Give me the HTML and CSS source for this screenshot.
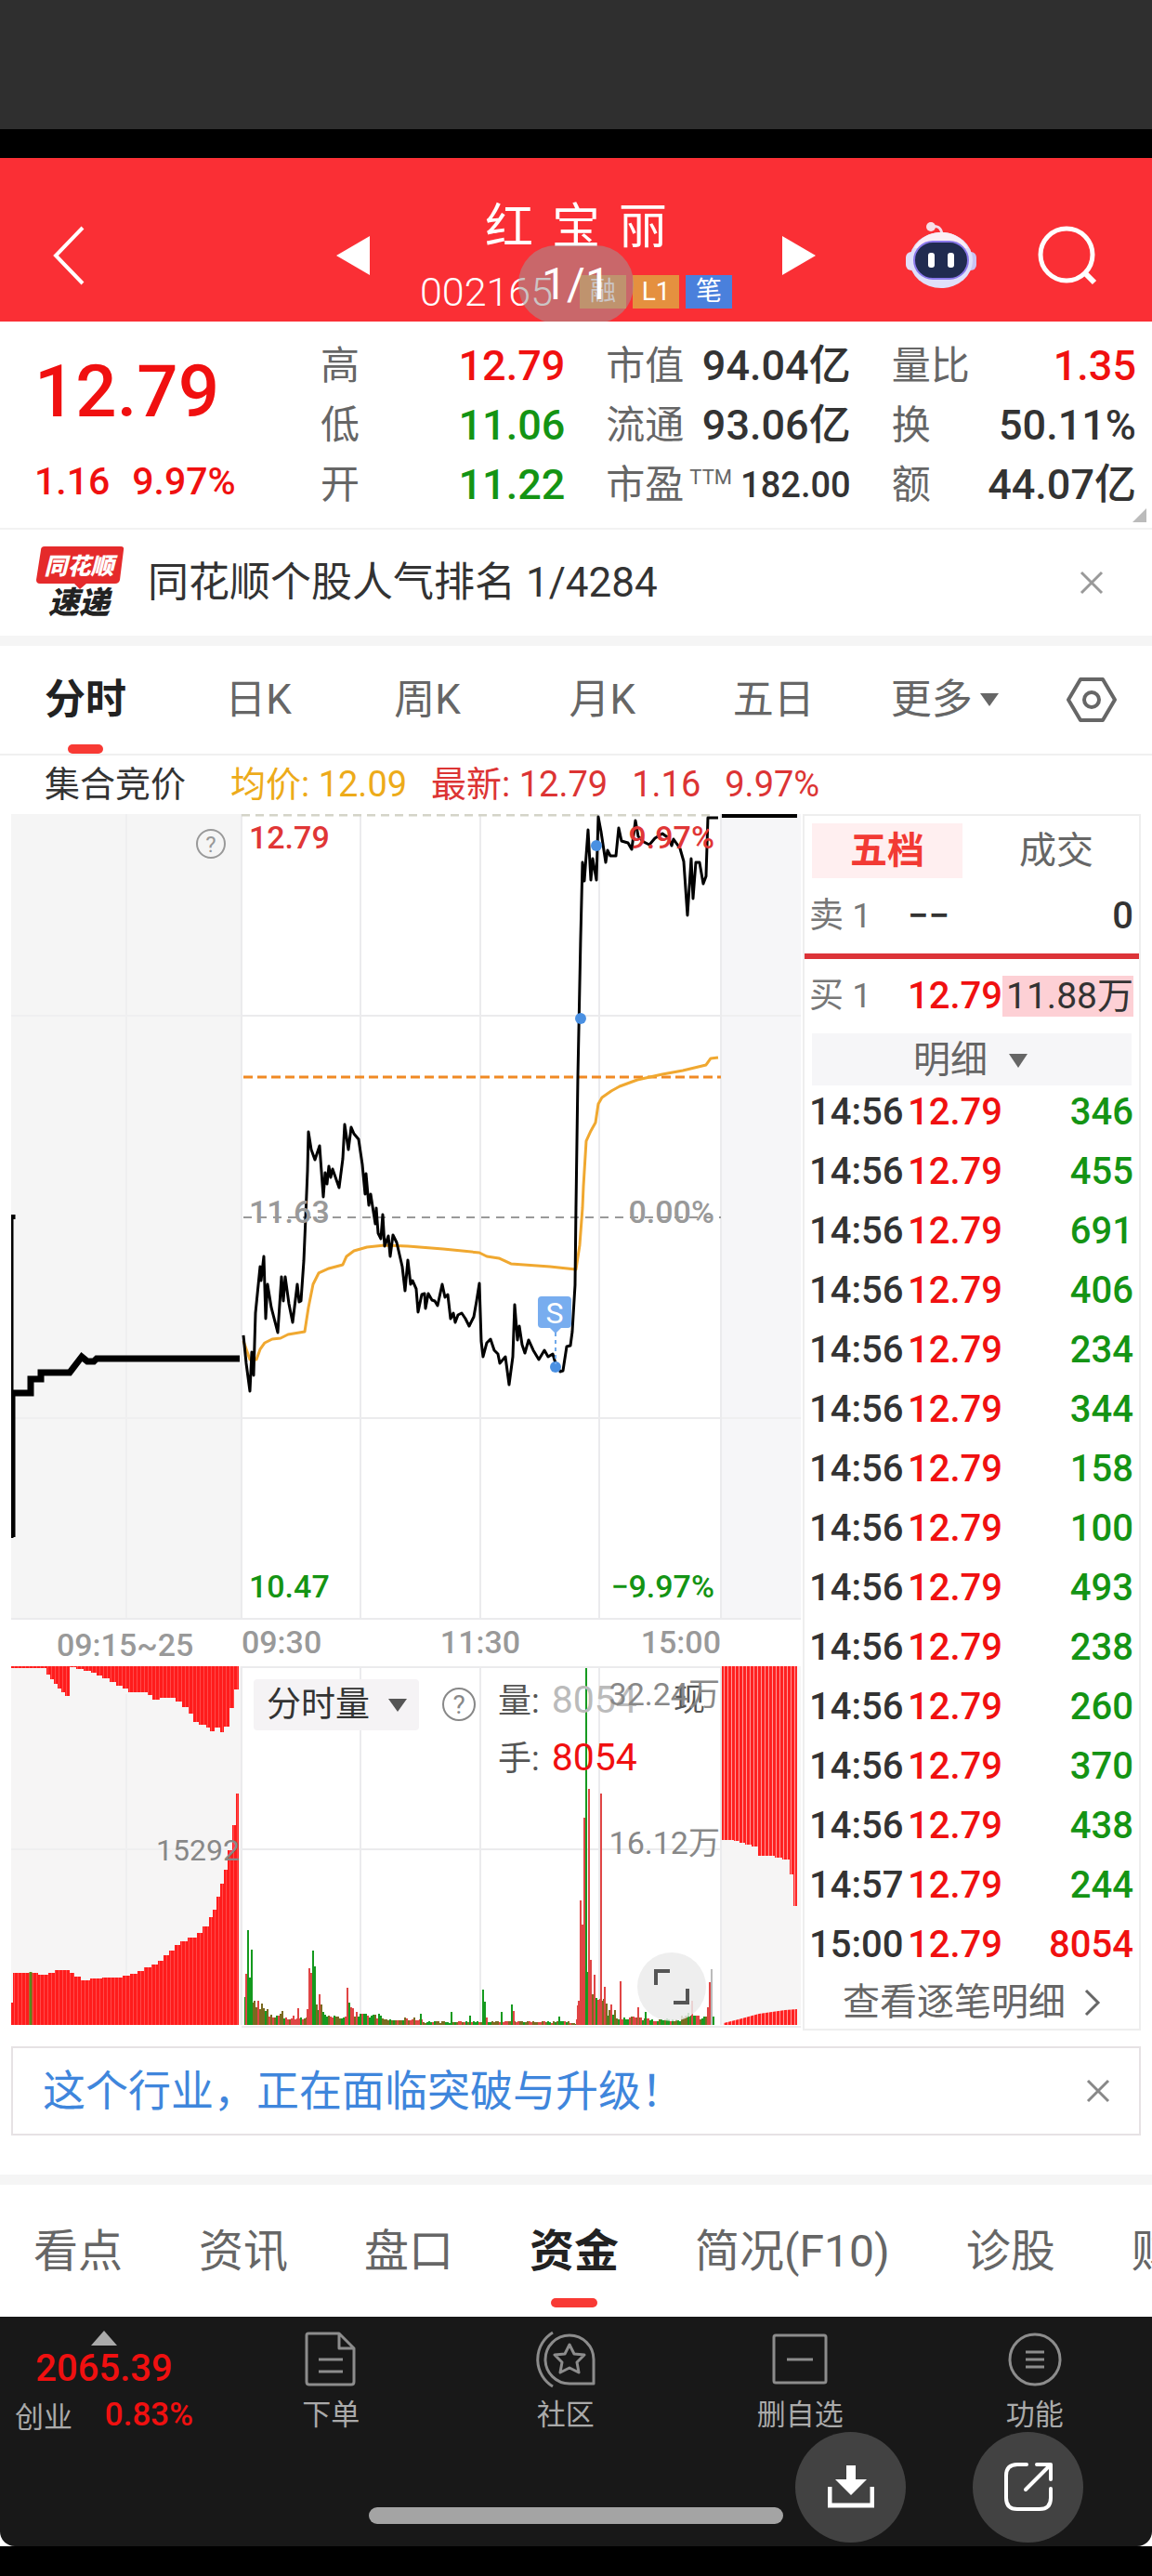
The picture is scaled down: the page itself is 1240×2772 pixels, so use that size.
FILE: index.html
```
<!DOCTYPE html>
<html lang="zh-CN">

<head>
    <meta charset="UTF-8">
    <meta name="viewport" content="width=device-width, initial-scale=1.0">
    <title>红宝丽 002165</title>
    <link rel="stylesheet" href="styles.css">
</head>

<body>
    <div class="viewer-bar"></div>
    <div class="notch"></div>

    <header class="header">
        <button class="icon-btn back" aria-label="返回">
            <svg width="36" height="66" viewBox="0 0 36 66"><path d="M33 3 4 33l29 30" fill="none" stroke="#fff" stroke-width="4"/></svg>
        </button>
        <div class="stock">
            <button class="icon-btn" aria-label="上一只">
                <svg width="36" height="42" viewBox="0 0 36 42"><path d="M36 0v42L0 21z" fill="#fff"/></svg>
            </button>
            <div class="stock-title">
                <h1><span>红</span><span>宝</span><span>丽</span></h1>
                <div class="stock-code">
                    <span class="code">002165</span>
                    <span class="badge">融</span>
                    <span class="badge">L1</span>
                    <span class="badge badge-blue">笔</span>
                </div>
            </div>
            <button class="icon-btn" aria-label="下一只">
                <svg width="36" height="42" viewBox="0 0 36 42"><path d="M0 0v42l36-21z" fill="#fff"/></svg>
            </button>
        </div>
        <div class="header-actions">
            <button class="icon-btn" aria-label="智能助手">
                <svg width="78" height="72" viewBox="0 0 78 72">
                    <path d="M28 5c7-2 11 1 12 8" fill="none" stroke="#f3dcec" stroke-width="3"/>
                    <circle cx="28" cy="5" r="5" fill="#f8dfe8"/>
                    <rect x="1" y="32" width="12" height="20" rx="6" fill="#e3def8"/>
                    <rect x="65" y="32" width="12" height="20" rx="6" fill="#c9c4f3"/>
                    <ellipse cx="39" cy="41" rx="34" ry="30" fill="#dfe0fa"/>
                    <path d="M10 28c8-14 20-17 29-17s21 3 29 17z" fill="#fbeef6"/>
                    <rect x="10" y="21" width="58" height="40" rx="20" fill="#202b50" stroke="#8a78ea" stroke-width="2"/>
                    <rect x="25" y="33" width="7" height="16" rx="3" fill="#fff"/>
                    <rect x="46" y="33" width="7" height="16" rx="3" fill="#fff"/>
                </svg>
            </button>
            <button class="icon-btn" aria-label="搜索">
                <svg width="66" height="66" viewBox="0 0 66 66" fill="none" stroke="#fff" stroke-width="5"><circle cx="32" cy="32" r="28"/><path d="m51 51 11 11" stroke-width="6"/></svg>
            </button>
        </div>
        <span class="page-pill">1/1</span>
    </header>

    <section class="quote">
        <div class="price-box">
            <div class="price">12.79</div>
            <div class="change"><span>1.16</span><span>9.97%</span></div>
        </div>
        <dl>
            <div><dt>高</dt><dd class="up">12.79</dd></div>
            <div><dt>低</dt><dd class="down">11.06</dd></div>
            <div><dt>开</dt><dd class="down">11.22</dd></div>
        </dl>
        <dl>
            <div><dt>市值</dt><dd>94.04亿</dd></div>
            <div><dt>流通</dt><dd>93.06亿</dd></div>
            <div><dt>市盈<sup>TTM</sup></dt><dd class="small">182.00</dd></div>
        </dl>
        <dl>
            <div><dt>量比</dt><dd class="up">1.35</dd></div>
            <div><dt>换</dt><dd>50.11%</dd></div>
            <div><dt>额</dt><dd>44.07亿</dd></div>
        </dl>
        <svg class="corner" width="15" height="15" viewBox="0 0 15 15"><path d="M15 0v15H0z" fill="#bbb"/></svg>
    </section>

    <section class="news">
        <svg width="96" height="78" viewBox="0 0 96 78">
            <path d="M9 0h82q4 0 3 4l-4 32q-1 4-5 4H54l-7 6-6-6H4q-4 0-4-4L5 4q0-4 4-4z" fill="#e52a2b"/>
            <text x="46" y="30" class="logo-top">同花顺</text>
            <text x="46" y="72" class="logo-bottom">速递</text>
        </svg>
        <a href="#" class="news-text">同花顺个股人气排名 1/4284</a>
        <button class="icon-btn" aria-label="关闭">
            <svg width="26" height="26" viewBox="0 0 26 26"><path d="m2 2 22 22M24 2 2 24" stroke="#999" stroke-width="3"/></svg>
        </button>
    </section>

    <nav class="periods">
        <a href="#" class="active">分时</a>
        <a href="#">日K</a>
        <a href="#">周K</a>
        <a href="#">月K</a>
        <a href="#">五日</a>
        <a href="#">更多<i class="caret"></i></a>
        <button class="icon-btn" aria-label="设置">
            <svg width="54" height="48" viewBox="0 0 54 48" fill="none" stroke="#666" stroke-width="4"><path d="M15 2h24l13 22-13 22H15L2 24z" stroke-linejoin="round"/><circle cx="27" cy="24" r="8"/></svg>
        </button>
    </nav>

    <div class="info">
        <span class="auction">集合竞价</span>
        <span class="avg">均价: 12.09</span>
        <span class="last">最新: 12.79</span>
        <span class="last">1.16</span>
        <span class="last">9.97%</span>
    </div>

    <main class="board">
        <div class="charts">
            <svg class="chart" viewBox="0 0 850 917">
                <rect width="248" height="866" fill="#f5f5f5"/>
                <rect x="764" width="86" height="866" fill="#f6f6f8"/>
                <path d="M124 0v866M0 217h248M0 650h248M764 217h86M764 650h86" stroke="#efeff0" stroke-width="2"/>
                <path d="M376 0v866M505 0v866M633 0v866M248 217h516M248 650h516M248 0v866M764 0v866M0 866h850" stroke="#ebebed" stroke-width="2" fill="none"/>
                <path d="M248 1h505" stroke="#d4d4c8" stroke-width="3" stroke-dasharray="9 6"/>
                <path d="M250 434h514" stroke="#999" stroke-width="2" stroke-dasharray="9 7"/>
                <path d="M250 283h514" stroke="#f08a24" stroke-width="3" stroke-dasharray="10 5"/>

                <!-- call auction -->
                <path d="M1 431v348M3 431v5M3 620v158" stroke="#000" stroke-width="3" fill="none"/>
                <path d="M0 623h21v-15h11v-7h31l13-17 6 5h7l3-3h154" stroke="#000" stroke-width="7" fill="none"/>

                <!-- average price -->
                <polyline class="line-avg" points="250,567 257,587 264,587 268,576 273,569 281,565 290,564 298,560 316,557 320,531 325,506 331,494 342,489 357,485 361,476 369,470 383,466 402,464 427,465 465,468 504,472 512,476 525,478 538,484 580,487 608,490 612,464 615,424 616,401 619,352 624,341 629,332 632,312 636,305 646,298 655,293 674,286 701,280 723,276 748,270 753,263 761,262"/>

                <!-- price -->
                <polyline class="line-price" points="250,561 253,591 257,621 259,579 261,604 263,537 268,487 269,502 272,476 274,543 276,506 280,531 287,558 291,498 293,524 295,498 299,527 303,547 308,506 310,525 312,524 315,481 317,434 319,384 320,342 323,361 327,372 332,357 336,412 338,386 340,398 342,379 344,391 346,382 353,402 357,371 359,334 363,361 366,337 369,344 374,350 378,377 381,409 382,387 385,421 387,409 389,422 392,441 393,424 395,451 398,457 400,431 402,465 406,454 408,476 411,453 415,461 421,487 424,513 427,480 430,506 432,502 436,511 438,536 442,517 445,516 446,532 449,516 453,523 456,524 459,529 464,506 467,520 470,517 473,543 476,537 478,547 481,539 485,537 489,543 493,551 498,541 501,524 504,505 506,567 508,584 512,569 516,565 520,577 524,581 526,591 532,584 536,614 540,584 542,528 545,566 547,551 550,571 553,580 557,566 562,577 568,587 574,577 578,584 583,581 586,591 591,600 594,599 598,573 602,572 604,557 607,507 608,424 610,284 613,134 615,52 617,72 621,17 624,71 626,48 630,71 632,3 635,19 640,52 642,39 645,45 651,45 654,15 657,29 664,31 668,38 672,7 675,24 681,30 687,33 693,26 701,21 708,26 711,34 713,27 720,37 724,51 728,109 732,48 734,91 737,52 741,52 745,75 748,67 750,4 761,4"/>
                <path d="M765 2h81" stroke="#000" stroke-width="4"/>

                <!-- trade marks -->
                <g fill="#4a90e2">
                    <circle cx="630" cy="34" r="6"/>
                    <circle cx="613" cy="220" r="6"/>
                    <circle cx="586" cy="595" r="6"/>
                </g>
                <path d="M586 558v34" stroke="#6fa8ea" stroke-width="2" stroke-dasharray="4 4"/>
                <path d="M571 519h28q4 0 4 4v26q0 4-4 4h-7l-6 6-6-6h-9q-4 0-4-4v-26q0-4 4-4z" fill="#78adef"/>
                <text x="585" y="548" font-size="32" text-anchor="middle" fill="#fff">S</text>

                <circle cx="215" cy="32" r="15" fill="none" stroke="#999" stroke-width="2"/>
                <text x="215" y="41" font-size="24" text-anchor="middle" fill="#999">?</text>

                <g class="axis">
                    <text x="256" y="37" fill="#e03636">12.79</text>
                    <text x="757" y="37" fill="#e03636" text-anchor="end">9.97%</text>
                    <text x="256" y="440">11.63</text>
                    <text x="757" y="440" text-anchor="end">0.00%</text>
                    <text x="256" y="843" fill="#149414">10.47</text>
                    <text x="757" y="843" fill="#149414" text-anchor="end">−9.97%</text>
                    <text x="49" y="906">09:15~25</text>
                    <text x="248" y="903">09:30</text>
                    <text x="505" y="903" text-anchor="middle">11:30</text>
                    <text x="764" y="903" text-anchor="end">15:00</text>
                </g>
            </svg>

            <div class="volume">
                <svg class="chart" viewBox="0 0 850 392">
                    <defs>
                        <pattern id="thin" width="4" height="8" patternUnits="userSpaceOnUse"><rect width="4" height="8" fill="#ff1c1c"/><rect x="3" width="1" height="8" fill="#ff4a4a"/></pattern>
                        <pattern id="wide" width="4" height="8" patternUnits="userSpaceOnUse"><rect width="4" height="8" fill="#ff2020"/><rect x="3" width="1" height="8" fill="#ff9c9c"/></pattern>
                    </defs>
                    <rect width="248" height="386" fill="#f6f5f5"/>
                    <rect x="764" width="86" height="386" fill="#f6f5f5"/>
                    <path d="M376 0v386M505 0v386M633 0v386M248 0v386M764 0v386M248 1h516M248 197h516M248 388h602" stroke="#ebebed" stroke-width="2" fill="none"/>
                    <path d="M124 30v356M0 197h248" stroke="#efeff0" stroke-width="2"/>
                    <path fill="url(#thin)" d="M0 0V2H38V9H42V14H46V19H50V24H54V28H58V32H63V1H70V3H78V5H86V7H92V10H98V13H106V17H113V21H120V24H126V28H147V31H152V36H160V34H177V38H184V44H191V51H196V60H202V63H210V66H214V70H219V66H225V71H229V65H235V45H240V25H245V0z"/>
                    <path fill="url(#thin)" d="M0 386V362H2V330H29V332H40V330H47V327H63V330H68V334H75V338H85V336H98V335H120V333H128V331H136V328H143V324H151V321H158V317H164V311H170V306H176V300H182V296H190V292H200V287H206V280H213V270H217V262H221V248H225V234H229V219H233V198H238V171H242V137H245V386z"/>
                    <path d="M21 329v57" stroke="#5a8a1c" stroke-width="3"/>
                    <path fill="url(#wide)" d="M765 0V187H778V188H784V190H790V192H797V194H804V204H822V206H830V208H838V224H842V258H846V0z"/>
                    <path fill="url(#wide)" d="M767 386V384L783 380 805 374 833 370 846 369V386z"/>
                    <g id="bars"></g>
                    <text x="246" y="209" font-size="32" text-anchor="end" class="axis-text">15292</text>
                </svg>
                <label class="sr-only" for="indicator">指标</label>
                <select id="indicator" class="indicator"><option>分时量</option></select>
                <svg class="volume-help" width="38" height="38" viewBox="0 0 38 38"><circle cx="19" cy="19" r="17" fill="none" stroke="#888" stroke-width="2"/><text x="19" y="29" font-size="28" text-anchor="middle" fill="#888">?</text></svg>
                <div class="volume-info">
                    <div>量: <span class="faded">8054</span></div>
                    <div>手: <span class="up">8054</span></div>
                </div>
                <span class="now">现</span>
                <span class="scale scale-top">32.24万</span>
                <span class="scale scale-mid">16.12万</span>
                <button class="expand" aria-label="全屏">
                    <svg width="38" height="38" viewBox="0 0 38 38"><path d="M2 17V2h15M36 21v15H21" fill="none" stroke="#555" stroke-width="4"/></svg>
                </button>
            </div>
        </div>

        <aside class="side">
            <div class="side-tabs">
                <button class="active">五档</button>
                <button>成交</button>
            </div>
            <div class="order sell"><span>卖 1</span><b>−−</b><b>0</b></div>
            <div class="order buy"><span>买 1</span><b class="up">12.79</b><b class="qty">11.88万</b></div>
            <div class="detail-select">
                <label class="sr-only" for="detail">明细类型</label>
                <select id="detail"><option>明细</option></select>
            </div>
            <table class="ticks">
                <tbody>
                    <tr><td>14:56</td><td class="up">12.79</td><td class="down">346</td></tr>
                    <tr><td>14:56</td><td class="up">12.79</td><td class="down">455</td></tr>
                    <tr><td>14:56</td><td class="up">12.79</td><td class="down">691</td></tr>
                    <tr><td>14:56</td><td class="up">12.79</td><td class="down">406</td></tr>
                    <tr><td>14:56</td><td class="up">12.79</td><td class="down">234</td></tr>
                    <tr><td>14:56</td><td class="up">12.79</td><td class="down">344</td></tr>
                    <tr><td>14:56</td><td class="up">12.79</td><td class="down">158</td></tr>
                    <tr><td>14:56</td><td class="up">12.79</td><td class="down">100</td></tr>
                    <tr><td>14:56</td><td class="up">12.79</td><td class="down">493</td></tr>
                    <tr><td>14:56</td><td class="up">12.79</td><td class="down">238</td></tr>
                    <tr><td>14:56</td><td class="up">12.79</td><td class="down">260</td></tr>
                    <tr><td>14:56</td><td class="up">12.79</td><td class="down">370</td></tr>
                    <tr><td>14:56</td><td class="up">12.79</td><td class="down">438</td></tr>
                    <tr><td>14:57</td><td class="up">12.79</td><td class="down">244</td></tr>
                    <tr><td>15:00</td><td class="up">12.79</td><td class="up">8054</td></tr>
                </tbody>
            </table>
            <a href="#" class="more">查看逐笔明细
                <svg width="18" height="30" viewBox="0 0 18 30"><path d="m2 2 13 13L2 28" fill="none" stroke="#666" stroke-width="3"/></svg>
            </a>
        </aside>
    </main>

    <div class="ad">
        <a href="#">这个行业，正在面临突破与升级！</a>
        <button class="icon-btn" aria-label="关闭">
            <svg width="26" height="26" viewBox="0 0 26 26"><path d="m2 2 22 22M24 2 2 24" stroke="#888" stroke-width="3"/></svg>
        </button>
    </div>

    <nav class="sections">
        <a href="#">看点</a>
        <a href="#">资讯</a>
        <a href="#">盘口</a>
        <a href="#" class="active">资金</a>
        <a href="#">简况(F10)</a>
        <a href="#">诊股</a>
        <a href="#">财务</a>
    </nav>

    <div class="footer-wrap">
        <footer class="footer">
            <div class="toolbar">
                <div class="index">
                    <svg width="28" height="16" viewBox="0 0 28 16"><path d="M14 0l14 16H0z" fill="#aaa"/></svg>
                    <div class="index-value">2065.39</div>
                    <div class="index-row"><span>创业</span><b>0.83%</b></div>
                </div>
                <button class="tool">
                    <svg width="56" height="60" viewBox="0 0 56 60"><path d="M4 2h33l16 16v36q0 3-3 3H5q-3 0-3-3V4q0-2 2-2zM37 2v16h16M15 30h26M15 43h26"/></svg>
                    下单
                </button>
                <button class="tool">
                    <svg width="66" height="62" viewBox="0 0 66 62"><path d="M19 2A34 34 0 0 0 19 60M37 5a26 26 0 0 0 0 52h26V31A26 26 0 0 0 37 5zM37 15l5 10 11 1-8 8 2 11-10-5-10 5 2-11-8-8 11-1z"/></svg>
                    社区
                </button>
                <button class="tool">
                    <svg width="60" height="56" viewBox="0 0 60 56"><rect x="2" y="2" width="56" height="51" rx="2"/><path d="M16 28h28"/></svg>
                    删自选
                </button>
                <button class="tool">
                    <svg width="58" height="58" viewBox="0 0 58 58"><circle cx="29" cy="29" r="27"/><path d="M19 21h20M19 29h20M19 37h20"/></svg>
                    功能
                </button>
            </div>
            <div class="home-bar"></div>
            <button class="float-btn download" aria-label="下载">
                <svg width="50" height="46" viewBox="0 0 50 46"><path d="M20 0h10v15h12L25 32 8 15h12z" fill="#fff"/><path d="M2 23v20h46V23" fill="none" stroke="#fff" stroke-width="5"/></svg>
            </button>
            <button class="float-btn share" aria-label="分享">
                <svg width="52" height="52" viewBox="0 0 52 52" fill="none" stroke="#fff" stroke-width="4" stroke-linecap="round" stroke-linejoin="round"><path d="M24 2H14Q2 2 2 14v24q0 12 12 12h24q12 0 12-12V28M35 2h15v16M49 3 23 29"/></svg>
            </button>
        </footer>
    </div>

    <script src="script.js"></script>
</body>

</html>
```
FILE: styles.css
```
* {
    box-sizing: border-box;
}

body {
    margin: 0;
    background-color: #000;
    color: #333;
    font-family: Roboto, "Noto Sans CJK SC", sans-serif;
    overflow-x: hidden;
}

a {
    color: inherit;
    text-decoration: none;
}

button,
select {
    font-family: inherit;
    border: none;
    background: none;
    padding: 0;
    cursor: pointer;
}

svg {
    display: block;
}

.icon-btn {
    flex: none;
}

.up {
    color: #f01010;
}

.down {
    color: #149414;
}

.sr-only {
    position: absolute;
    width: 1px;
    height: 1px;
    overflow: hidden;
    clip-path: inset(50%);
}

.caret {
    border: 10px solid transparent;
    border-top: 14px solid #666;
    border-bottom: none;
}

/* top */
.viewer-bar {
    height: 139px;
    background-color: #2f2f2f;
}

.notch {
    height: 31px;
}

.header {
    position: relative;
    display: grid;
    grid-template-columns: 1fr 516px 1fr;
    align-items: center;
    height: 176px;
    padding-top: 34px;
    background-color: #fa2f35;
    color: #fff;
}

.back {
    justify-self: start;
    margin-left: 56px;
}

.stock {
    display: flex;
    justify-content: space-between;
    align-items: center;
}

.stock h1 {
    display: flex;
    justify-content: center;
    gap: 20px;
    margin: 0 0 22px;
    font-size: 52px;
    line-height: 56px;
    font-weight: 400;
}

.stock-code {
    display: flex;
    align-items: center;
    gap: 7px;
    line-height: 38px;
}

.code {
    margin-right: 22px;
    font-size: 43px;
    font-weight: 300;
}

.badge {
    width: 50px;
    line-height: 36px;
    background-color: #e5903f;
    font-size: 28px;
    text-align: center;
}

.badge-blue {
    background-color: #4a80dc;
}

.header-actions {
    display: flex;
    justify-content: flex-end;
    align-items: center;
    gap: 64px;
    padding-right: 58px;
}

.page-pill {
    position: absolute;
    top: 94px;
    left: 50%;
    width: 124px;
    border-radius: 41px;
    background-color: rgba(160, 150, 150, 0.55);
    font-size: 48px;
    line-height: 84px;
    text-align: center;
    transform: translateX(-50%);
}

/* quote */
.quote {
    position: relative;
    display: grid;
    grid-template-columns: 264px 1fr 1fr 1fr;
    column-gap: 44px;
    height: 224px;
    padding: 16px 17px 0 37px;
    border-bottom: 2px solid #f2f2f2;
    background-color: #fff;
}

.price-box {
    color: #f01010;
    font-weight: 500;
}

.price {
    margin: 20px 0 24px;
    font-size: 78px;
    line-height: 80px;
}

.change {
    display: flex;
    gap: 24px;
    font-size: 41px;
    line-height: 64px;
}

.quote dl {
    margin: 0;
}

.quote dl div {
    display: flex;
    justify-content: space-between;
    line-height: 64px;
    white-space: nowrap;
}

.quote dt {
    color: #666;
    font-size: 42px;
}

.quote dd {
    margin: 0;
    font-size: 45px;
    font-weight: 500;
}

.quote dd.small {
    font-size: 38px;
}

.quote sup {
    margin-left: 6px;
    font-size: 22px;
    line-height: 22px;
}

.corner {
    position: absolute;
    right: 6px;
    bottom: 6px;
}

/* news */
.news {
    display: flex;
    align-items: center;
    gap: 24px;
    height: 114px;
    padding: 0 52px 0 39px;
    background-color: #fff;
}

.news-text {
    flex: 1;
    font-size: 44px;
    line-height: 60px;
}

.logo-top,
.logo-bottom {
    font-size: 25px;
    font-weight: 900;
    font-style: italic;
    text-anchor: middle;
    fill: #fff;
}

.logo-bottom {
    font-size: 33px;
    fill: #222;
}

/* period tabs */
.periods {
    display: grid;
    grid-template-columns: 194fr 182fr 188fr 176fr 170fr 189fr 54px;
    align-items: center;
    height: 129px;
    padding: 0 38px 0 48px;
    border-top: 11px solid #f5f5f5;
    border-bottom: 2px solid #f0f0f0;
    background-color: #fff;
    color: #666;
    font-size: 44px;
    line-height: 116px;
}

.periods a {
    position: relative;
    display: flex;
    justify-self: start;
    align-items: center;
    gap: 8px;
}

.active {
    font-weight: 700;
}

.periods .active,
.sections .active {
    color: #222;
}

.periods .active::after,
.sections .active::after {
    content: '';
    position: absolute;
    left: 50%;
    bottom: 0;
    width: 38px;
    height: 10px;
    border-radius: 5px;
    background-color: #f83a34;
    transform: translateX(-50%);
}

.info {
    display: flex;
    gap: 26px;
    padding: 0 48px;
    background-color: #fff;
    font-size: 38px;
    line-height: 63px;
    white-space: nowrap;
}

.auction {
    margin-right: 22px;
}

.avg {
    color: #edab1a;
}

.last {
    color: #dc3434;
}

/* charts */
.board {
    display: grid;
    grid-template-columns: 850fr 364fr;
    column-gap: 2px;
    padding: 0 12px 17px;
    background-color: #fff;
}

.chart {
    width: 100%;
    height: auto;
}

.line-price {
    fill: none;
    stroke: #000;
    stroke-width: 3;
    stroke-linejoin: round;
}

.line-avg {
    fill: none;
    stroke: #f0a830;
    stroke-width: 3;
    stroke-linejoin: round;
}

.axis {
    fill: #999;
    font-size: 34px;
    font-weight: 500;
}

.axis-text {
    fill: #888;
}

.volume {
    position: relative;
}

.indicator {
    position: absolute;
    top: 14px;
    left: 261px;
    width: 178px;
    height: 55px;
    padding-left: 14px;
    appearance: none;
    border-radius: 4px;
    background-color: #f5f3f5;
    color: #333;
    font-size: 37px;
}

.volume::before {
    content: '';
    position: absolute;
    z-index: 1;
    top: 35px;
    left: 406px;
    border: 10px solid transparent;
    border-top: 14px solid #555;
    border-bottom: none;
    pointer-events: none;
}

.volume-help {
    position: absolute;
    top: 22px;
    left: 463px;
}

.volume-info {
    position: absolute;
    top: 6px;
    left: 524px;
    color: #555;
    font-size: 36px;
    line-height: 60px;
}

.volume-info span {
    margin-left: 4px;
    font-size: 41px;
}

.volume-info .faded {
    color: #bbb;
}

.now,
.scale {
    position: absolute;
    font-size: 34px;
    line-height: 60px;
}

.now {
    top: 6px;
    left: 713px;
    color: #555;
}

.scale {
    right: 87px;
    color: #888;
}

.scale-top {
    top: 0;
}

.scale-mid {
    top: 160px;
}

.expand {
    position: absolute;
    top: 308px;
    left: 674px;
    display: flex;
    justify-content: center;
    align-items: center;
    width: 74px;
    height: 74px;
    border-radius: 50%;
    background-color: rgba(235, 235, 235, 0.85);
}

/* order book */
.side {
    display: flex;
    flex-direction: column;
    border: 2px solid #eee;
    font-size: 40px;
    font-weight: 500;
}

.side-tabs {
    display: grid;
    grid-template-columns: 1fr 1fr;
    gap: 20px;
    padding: 8px 8px 0;
}

.side-tabs button {
    height: 59px;
    color: #666;
    font-size: 40px;
    line-height: 56px;
}

.side-tabs .active {
    background-color: #ffeff0;
    color: #f23a34;
}

.order {
    display: grid;
    grid-template-columns: 106px 1fr auto;
    align-items: center;
    padding: 0 6px 0 5px;
    line-height: 81px;
    white-space: nowrap;
}

.order span {
    color: #777;
    font-size: 37px;
    font-weight: 400;
}

.order b {
    font-weight: 500;
}

.sell {
    border-bottom: 6px solid #dc3438;
}

.buy {
    line-height: 80px;
}

.buy .qty {
    padding-left: 4px;
    background-color: #fdd0d5;
    font-size: 39px;
    font-weight: 400;
    line-height: 44px;
}

.detail-select {
    position: relative;
    margin: 0 8px;
}

.detail-select select {
    display: block;
    width: 100%;
    height: 56px;
    padding-right: 46px;
    appearance: none;
    background-color: #f6f6f8;
    color: #666;
    font-size: 40px;
    text-align: center;
    text-align-last: center;
}

.detail-select::after {
    content: '';
    position: absolute;
    top: 22px;
    right: 112px;
    border: 10px solid transparent;
    border-top: 15px solid #666;
    border-bottom: none;
    pointer-events: none;
}

.ticks {
    width: 100%;
    border-collapse: collapse;
}

.ticks td {
    height: 64px;
    padding: 0 0 6px;
    line-height: 56px;
}

.ticks td:first-child {
    width: 111px;
    padding-left: 5px;
}

.ticks td:last-child {
    padding-right: 6px;
    text-align: right;
}

.more {
    display: flex;
    flex: 1;
    justify-content: center;
    align-items: center;
    gap: 20px;
    color: #666;
    font-weight: 400;
    line-height: 50px;
}

/* ad */
.ad {
    position: relative;
    display: flex;
    align-items: center;
    padding: 0 12px 42px;
    background-color: #fff;
}

.ad a {
    flex: 1;
    padding-left: 32px;
    border: 2px solid #e6e2e4;
    color: #3f86dc;
    font-size: 46px;
    line-height: 92px;
}

.ad .icon-btn {
    position: absolute;
    right: 45px;
    top: 35px;
}

/* section tabs */
.sections {
    display: flex;
    gap: 82px;
    height: 153px;
    padding-left: 36px;
    border-top: 11px solid #f5f5f5;
    background-color: #fff;
    color: #666;
    font-size: 48px;
    line-height: 144px;
    white-space: nowrap;
    overflow: hidden;
}

.sections a {
    position: relative;
}

.sections .active::after {
    bottom: 10px;
    width: 50px;
}

/* footer */
.footer-wrap {
    margin-bottom: 32px;
    background-color: #fff;
}

.footer {
    position: relative;
    height: 247px;
    border-radius: 0 0 16px 16px;
    background-color: #181818;
}

.toolbar {
    display: grid;
    grid-template-columns: 230px repeat(4, 1fr);
    height: 205px;
}

.index {
    padding: 15px 22px 0 16px;
}

.index svg {
    margin: 0 auto;
}

.index-value,
.index-row b {
    color: #f01010;
    font-size: 40px;
    font-weight: 500;
    line-height: 50px;
    text-align: center;
}

.index-row {
    display: flex;
    justify-content: space-between;
    align-items: center;
    color: #aaa;
    font-size: 31px;
}

.index-row b {
    font-size: 35px;
}

.tool {
    display: grid;
    grid-template-rows: 64px 50px;
    align-content: start;
    justify-items: center;
    align-items: center;
    padding-top: 14px;
    color: #aaa;
    font-size: 31px;
}

.tool svg {
    fill: none;
    stroke: #8c8c8c;
    stroke-width: 3;
    stroke-linejoin: round;
}

.home-bar {
    width: 36%;
    height: 18px;
    margin: 0 auto;
    border-radius: 9px;
    background-color: #a4a4a4;
}

.float-btn {
    position: absolute;
    top: 124px;
    display: flex;
    justify-content: center;
    align-items: center;
    width: 119px;
    height: 119px;
    border-radius: 50%;
    background-color: #424242;
}

.download {
    right: 265px;
}

.share {
    right: 74px;
}
```
FILE: script.js
```
// minute bars: [x, height, colour]
const BASE = 386;
const RED = '#e04444';
const GREEN = '#149a1e';
const BROWN = '#7a6a20';

const spikes = [
    [252, 55, RED], [254, 102, GREEN], [256, 51, GREEN], [258, 81, GREEN],
    [308, 18, RED], [318, 17, RED], [320, 61, RED], [322, 56, RED], [324, 80, GREEN], [326, 63, GREEN],
    [328, 22, BROWN], [331, 33, RED], [333, 22, BROWN],
    [361, 40, RED], [363, 24, GREEN], [365, 19, RED], [367, 18, RED],
    [440, 12, GREEN], [473, 14, GREEN], [493, 10, GREEN],
    [507, 38, GREEN], [509, 25, GREEN], [511, 8, RED], [527, 14, GREEN], [538, 22, GREEN], [540, 15, RED],
    [589, 9, GREEN], [608, 6, RED], [610, 26, RED], [612, 134, RED], [614, 108, RED], [616, 223, RED],
    [618, 384, GREEN], [621, 254, RED], [623, 70, RED], [625, 33, BROWN], [627, 54, RED],
    [634, 249, RED], [638, 41, RED], [640, 23, BROWN], [645, 22, RED], [655, 47, RED],
    [674, 19, RED], [682, 14, GREEN], [728, 13, GREEN], [732, 26, RED], [749, 19, RED], [751, 46, RED], [753, 60, '#bbbbbb']
];

// rough height of ordinary minutes: [until x, height]
const levels = [
    [262, 28], [270, 27], [275, 18], [284, 10], [292, 14], [322, 9], [333, 20], [343, 14],
    [356, 9], [371, 13], [400, 11], [420, 6], [442, 7], [600, 4], [608, 2], [614, 30],
    [626, 60], [638, 27], [650, 15], [672, 9], [690, 8], [720, 6], [756, 10]
];

const taken = new Set(spikes.map(s => s[0]));
const bars = [];
let seed = 7;

function rand() {
    seed = (seed * 16807) % 2147483647;
    return seed / 2147483647;
}

for (let x = 251; x < 756; x += 2) {
    const height = levels.find(l => x <= l[0])[1];
    const colour = [GREEN, RED, BROWN][Math.floor(rand() * 3)];
    if (!taken.has(x)) {
        bars.push([x, Math.max(1, Math.round(height * (0.6 + rand() * 0.5))), colour]);
    }
}

const group = document.getElementById('bars');
bars.concat(spikes).forEach(([x, height, colour]) => {
    const rect = document.createElementNS('http://www.w3.org/2000/svg', 'rect');
    rect.setAttribute('x', x);
    rect.setAttribute('y', BASE - height);
    rect.setAttribute('width', 2);
    rect.setAttribute('height', height);
    rect.setAttribute('fill', colour);
    group.appendChild(rect);
});
```
